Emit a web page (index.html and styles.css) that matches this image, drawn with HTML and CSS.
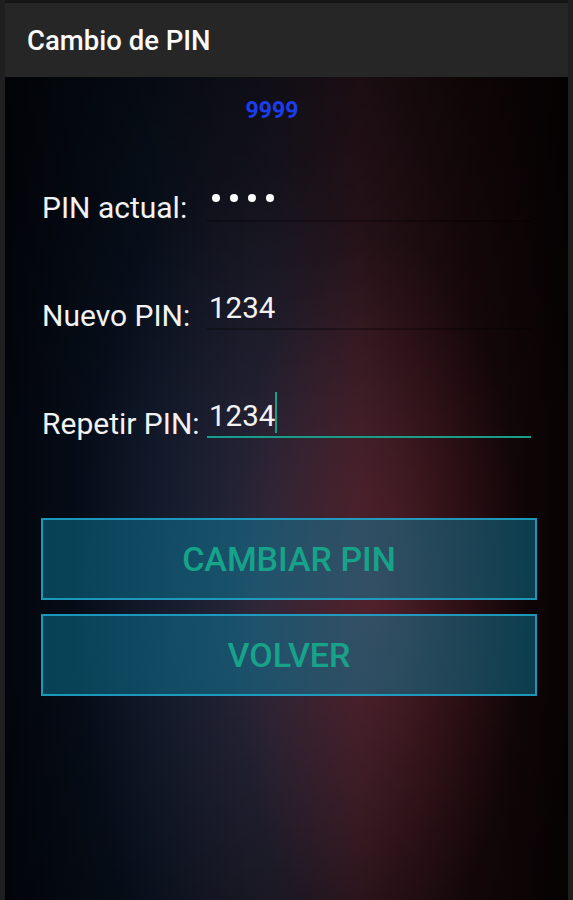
FILE: index.html
```html
<!DOCTYPE html>
<html lang="es">
<head>
	<meta charset="UTF-8">
	<title>Cambio de PIN</title>
	<link rel="stylesheet" href="styles.css">
</head>
<body>

<div class="phone">
	<header class="bar">
		<h1 class="bar_title">Cambio de PIN</h1>
	</header>

	<main class="screen">
		<div class="balance">9999</div>

		<form class="pin_form">
			<div class="row">
				<label class="label">PIN actual:</label>
				<div class="field">
					<span class="dots"><i></i><i></i><i></i><i></i></span>
				</div>
			</div>
			<div class="row">
				<label class="label">Nuevo PIN:</label>
				<div class="field">
					<span class="value">1234</span>
				</div>
			</div>
			<div class="row">
				<label class="label">Repetir PIN:</label>
				<div class="field focused">
					<span class="value">1234</span><span class="cursor"></span>
				</div>
			</div>
		</form>

		<div class="actions">
			<button class="btn" type="button">Cambiar PIN</button>
			<button class="btn" type="button">Volver</button>
		</div>
	</main>
</div>

</body>
</html>
```

FILE: styles.css
```css
	*{
		margin: 0;
		padding: 0;
		box-sizing: border-box;
	}
	body{
		background: #1f1f1f;
		font-family: Roboto, "Liberation Sans", sans-serif;
		color: #f2f2f2;
	}

	.phone{
		border-top: 3px solid #151515;
		margin: 0 5px;
		display: flex;
		flex-direction: column;
		min-height: 900px;
	}

	/* action bar */
	.bar{
		height: 74px;
		background: #262626;
		display: flex;
		align-items: center;
		padding-left: 22px;
	}
	.bar_title{
		font-size: 27.5px;
		font-weight: 500;
		color: #fafafa;
	}

	/* fondo */
	.screen{
		flex: 1;
		background:
			radial-gradient(ellipse 150px 360px at 372px 520px, rgba(110,38,48,0.5), rgba(110,38,48,0)),
			radial-gradient(ellipse 180px 430px at 250px 520px, rgba(70,70,100,0.3), rgba(70,70,100,0)),
			linear-gradient(180deg, rgba(0,0,0,0.45) 0%, rgba(0,0,0,0) 45%, rgba(0,0,0,0) 70%, rgba(0,0,0,0.25) 100%),
			linear-gradient(90deg, #02050c 0%, #0a1322 25%, #1d1a28 47%, #311820 63%, #1a090c 82%, #070203 100%);
	}

	.balance{
		margin-top: 20px;
		height: 28px;
		line-height: 28px;
		text-align: center;
		padding-right: 29px;
		font-size: 23px;
		font-weight: 700;
		color: #1c3ded;
	}

	.pin_form{
		margin-top: 37px;
		padding: 0 37px;
		display: flex;
		flex-direction: column;
		gap: 48px;
	}
	.row{
		height: 60px;
		display: flex;
		align-items: flex-end;
	}
	.label{
		flex: 0 0 165px;
		font-size: 30px;
		line-height: 29px;
	}
	.field{
		flex: 1;
		display: flex;
		align-items: flex-end;
		border-bottom: 2px solid rgba(0,0,0,0.3);
	}
	.field.focused{
		border-bottom-color: #1a9c8a;
	}
	.value{
		padding: 0 0 5px 2px;
		font-size: 29.5px;
		line-height: 29px;
	}
	.cursor{
		width: 2px;
		height: 41px;
		margin-bottom: 3px;
		background: #1a9c8a;
	}
	.dots{
		display: flex;
		gap: 10px;
		padding: 0 0 18px 5px;
	}
	.dots i{
		width: 8px;
		height: 8px;
		border-radius: 50%;
		background: #fff;
	}

	/* botones */
	.actions{
		margin-top: 80px;
		padding: 0 31px 0 36px;
		display: flex;
		flex-direction: column;
		gap: 14px;
	}
	.btn{
		height: 82px;
		background: rgba(12,144,179,0.42);
		border: 2px solid rgba(32,172,212,0.8);
		font-family: Roboto, "Liberation Sans", sans-serif;
		font-size: 34px;
		font-weight: 500;
		text-transform: uppercase;
		color: #17a38a;
		cursor: pointer;
	}
```
